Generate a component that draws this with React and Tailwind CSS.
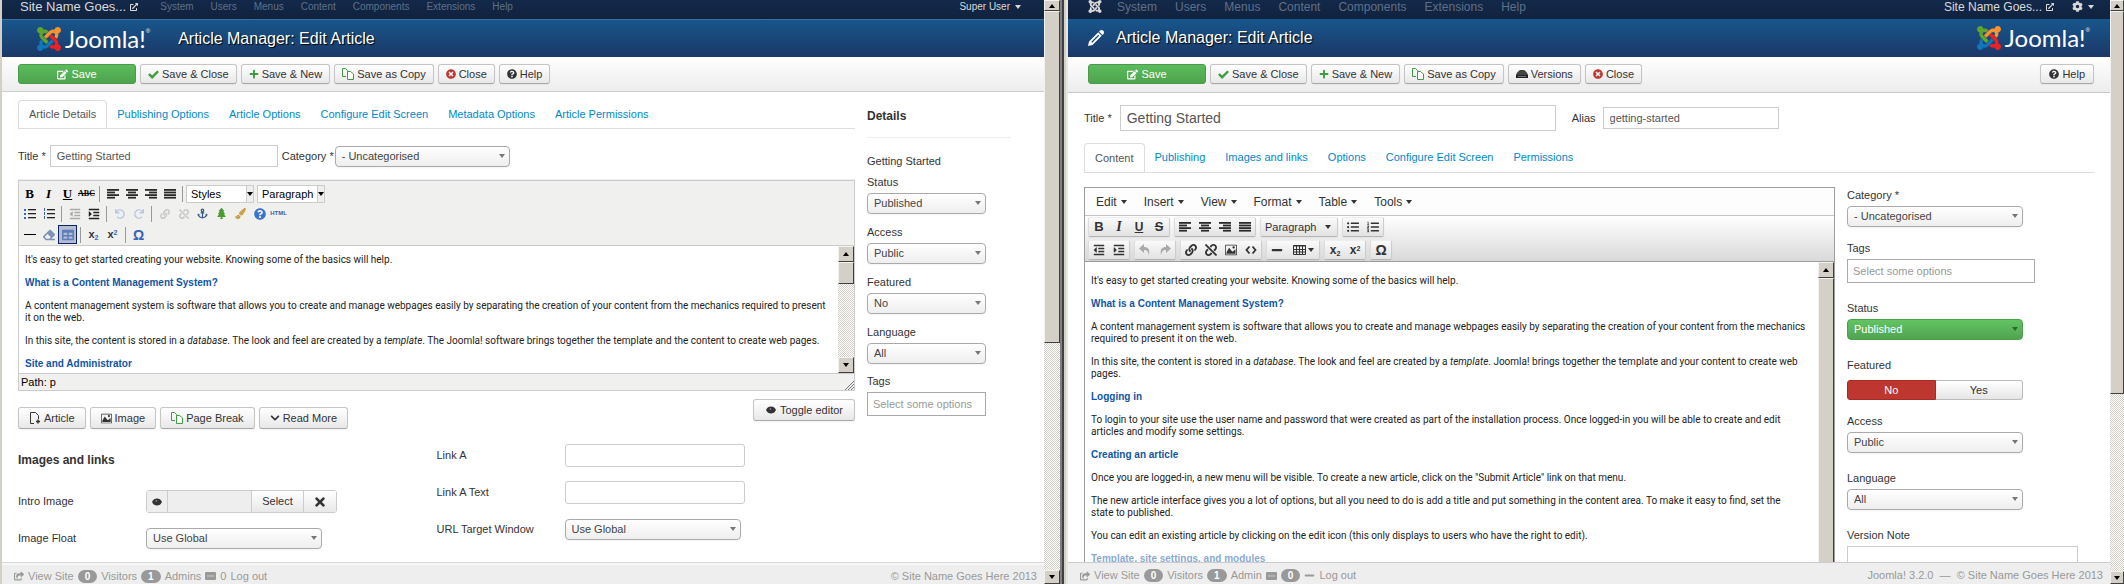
import React from "react";
import {
  FaEdit, FaPlus, FaTimesCircle, FaQuestionCircle, FaTimes, FaChevronDown,
  FaExternalLinkAlt, FaCog, FaShareSquare, FaMinus, FaLink, FaUnlink, FaUndo, FaRedo,
  FaTable, FaListUl, FaListOl, FaAnchor, FaPaintBrush, FaOutdent, FaIndent, FaEraser, FaTree,
} from "react-icons/fa";
import { ImImage, ImPencil, ImCheckmark } from "react-icons/im";

const JOOMLA = [
  ["#5fa52d", "M.6 92.1C.6 58.8 27.4 32 60.4 32c30 0 54.5 21.9 59.2 50.2 32.6-7.6 67.1.6 96.5 30l-44.3 44.3c-20.5-20.5-42.6-16.3-55.4-3.5-14.3 14.3-14.3 37.9 0 52.2l99.5 99.5-44 44.3c-87.7-87.2-49.7-49.7-99.8-99.7-26.8-26.5-35-64.8-24.8-98.9C20.4 144.6.6 120.7.6 92.1z"],
  ["#f7922d", "M130.1 208.5l44.3 44.3c10-10 89.7-89.7 99.7-99.8 14.3-14.3 37.6-14.3 51.9 0 12.8 12.8 17 35-3.5 55.4l44 44.3c31.2-31.2 38.5-67.6 28.9-101.2 29.2-4.1 51.9-29.2 51.9-59.5 0-33.2-26.8-60.1-59.8-60.1-30.3 0-55.4 22.5-59.5 51.6-33.8-9.9-71.7-1.5-98.3 25.1-18.3 19.1-71.1 71.5-99.6 99.9z"],
  ["#ed2024", "M396.4 360.7c8.2-32.7-.9-68.5-26.3-93.9-11.8-12.2 5 4.700-99.5-99.7l-44.3 44.3 99.7 99.7c14.3 14.3 14.3 37.6 0 51.9-12.8 12.8-35 17-55.4-3.5l-44 44.3c27.6 30.2 68 38.8 102.7 28 5.5 27.4 29.7 48.1 58.9 48.1 33 0 59.8-26.8 59.8-60.1 0-30.2-22.5-55-51.6-59.1z"],
  ["#0f76bb", "M312.1 307.6l-44-44.3c-87 86.4-50.4 50.4-99.7 99.8-14.3 14.3-37.6 14.3-51.9 0-13.1-13.4-16.9-35.3 3.2-55.4l-44-44.3c-30.2 30.2-38 65.2-29.5 98.3-26.7 6-46.2 29.900-46.2 58.2C0 453.2 26.8 480 59.8 480c28.6 0 52.5-19.8 58.6-46.7 32.7 8.2 68.5-.6 94.2-26 32.1-32 12.2-12.4 99.5-99.7z"],
];

const JoomlaMark = ({ mono, className }) => (
  <svg viewBox="0 32 448 448" className={className} aria-hidden="true">
    {JOOMLA.map(([c, d]) => <path key={c} d={d} fill={mono || c} />)}
  </svg>
);

const Logo = () => (
  <div className="flex items-center text-white">
    <JoomlaMark className="size-6" />
    <span className="ml-1 font-[Lato] text-2xl leading-6">Joomla!</span>
    <sup className="-top-2 text-[6px]">®</sup>
  </div>
);

const Caret = ({ className = "" }) => (
  <svg viewBox="0 0 6 4" className={"h-1 w-1.5 shrink-0 " + className} aria-hidden="true">
    <path d="M0 0h6L3 4z" fill="currentColor" />
  </svg>
);

const EyeIcon = () => (
  <svg viewBox="0 0 12 10" className="h-2.5 w-3 shrink-0" aria-hidden="true">
    <path d="M1 5c1-2.500 3-3.500 5-3.500s4 1 5 3.500c-1 2.500-3 3.500-5 3.500S2 7.500 1 5z" fill="#333" />
    <circle cx="5.4" cy="4" r=".8" fill="#aaa" />
  </svg>
);

const DriveIcon = () => (
  <svg viewBox="0 0 12 10" className="h-2.5 w-3 shrink-0" aria-hidden="true">
    <path d="M4 1h4c2 1 3.500 3 4 5H0c.5-2 2-4 4-5z" fill="#444" />
    <path d="M0 6h12v3H0z" fill="#222" />
    <path d="M2 7.5h8" stroke="#999" strokeWidth=".7" />
  </svg>
);

const PagesIcon = () => (
  <svg viewBox="0 0 12 12" className="size-3 shrink-0" fill="none" stroke="#3f9b3f" aria-hidden="true">
    <path d="M4 8.500H.5v-8h3l2 2v1" />
    <path d="M5.500 3.500h3l3 2.500v5.500h-6z" fill="#fff" />
  </svg>
);

const PageAddIcon = () => (
  <svg viewBox="0 0 12 12" className="size-3 shrink-0" fill="none" stroke="#333" aria-hidden="true">
    <path d="M5 11.500H1.500V.5h5l3 3V7" />
    <path d="M9 7.500v4M7 9.500h4" strokeWidth="1.500" />
  </svg>
);

const ALIGN = {
  left: [[0, 12], [0, 8], [0, 12], [0, 8]],
  center: [[0, 12], [2, 8], [0, 12], [2, 8]],
  right: [[0, 12], [4, 8], [0, 12], [4, 8]],
  justify: [[0, 12], [0, 12], [0, 12], [0, 12]],
};
const AlignIcon = ({ kind }) => (
  <svg viewBox="0 0 12 10" className="h-2.5 w-3" aria-hidden="true">
    {ALIGN[kind].map(([x, w], i) => <rect key={i} x={x} y={i * 2.6} width={w} height="1.8" fill="#2a2a2a" />)}
  </svg>
);

const BTN = "inline-flex items-center justify-center whitespace-nowrap rounded-[3px] border border-[#c5c5c5] border-b-[#a8a8a8] bg-linear-to-b from-white to-[#e8e8e8] text-[11px] text-[#333] shadow-xs";
const Btn = ({ icon, children, className = "h-5 px-[7px]" }) => (
  <button type="button" className={`${BTN} gap-[3px] ${className}`}>{icon}{children}</button>
);

const SaveBtn = () => (
  <button type="button" className="inline-flex h-5 w-[118px] items-center justify-center gap-[3px] rounded-[3px] border border-[#4a9a4a] bg-linear-to-b from-[#5cbb5c] to-[#4da44d] text-[11px] text-white">
    <FaEdit className="size-[11px]" />Save
  </button>
);

const Select = ({ id, value, className = "w-full", green }) => (
  <span className={`relative inline-flex ${className}`}>
    <select id={id} defaultValue={value} className={
      "h-[21px] w-full appearance-none rounded-[4px] border pl-[6px] text-[11px] leading-none " +
      (green ? "border-[#4a9f4a] bg-linear-to-b from-[#62c462] to-[#51a351] text-white"
        : "border-[#aaa] bg-linear-to-b from-white to-[#eee] text-[#444] shadow-xs")
    }>
      <option>{value}</option>
    </select>
    <Caret className={"pointer-events-none absolute top-2 right-[5px] " + (green ? "text-[#2d6a2d]" : "text-[#777]")} />
  </span>
);

const INPUT = "border border-[#ccc] bg-white px-[6px] text-[11px] text-[#555] placeholder:text-[#999]";

const Tabs = ({ items, height }) => (
  <nav className="flex border-b border-[#ddd]">
    {items.map((t, i) => (
      <a key={t} href="#" className={
        `flex items-center px-[10px] text-[11px] whitespace-nowrap ${height} ` +
        (i === 0 ? "-mb-px rounded-t-[4px] border border-b-0 border-[#ddd] bg-white text-[#555]" : "text-[#08c]")
      }>{t}</a>
    ))}
  </nav>
);

/* classic window scroll bar */
const BOX = "flex shrink-0 items-center justify-center border border-t-[#f4f2ee] border-l-[#f4f2ee] border-r-[#404040] border-b-[#404040] bg-[#d4d0c8] text-black";
const Scrollbar = ({ className, up = "h-4", down = "h-4", thumb }) => (
  <div className={`flex shrink-0 flex-col bg-[repeating-conic-gradient(#fff_0_25%,#d4d0c8_0_50%)] bg-[length:2px_2px] ${className}`}>
    <button type="button" aria-label="Scroll up" className={`${BOX} ${up}`}><Caret className="rotate-180" /></button>
    <div className={`${BOX} ${thumb}`} />
    <div className="flex-1" />
    {down && <button type="button" aria-label="Scroll down" className={`${BOX} ${down}`}><Caret /></button>}
  </div>
);

const Badge = ({ children }) => (
  <span className="rounded-full bg-[#999] px-[7px] text-[10px] leading-[13px] font-bold text-white">{children}</span>
);
const EnvelopeIcon = () => (
  <svg viewBox="0 0 11 8" className="h-2 w-[11px]" aria-hidden="true">
    <rect width="11" height="8" rx="1" fill="#999" /><path d="M2 4h7" stroke="#ccc" />
  </svg>
);

const Heading = ({ children }) => <h2 className="mb-[11px] font-['Liberation_Sans',Arial,sans-serif] text-[10px] leading-3 font-bold text-[#1055a5]">{children}</h2>;
const P = ({ children }) => <p className="mb-[11px]">{children}</p>;
const ARTICLE = "min-w-0 flex-1 overflow-hidden pl-[6px] font-[Roboto,sans-serif] text-[10px] leading-3 text-[#222]";

const Sep = () => <span className="mx-[3px] h-4 w-px bg-[#999]" />;
const Tool = ({ label, children, className = "w-5" }) => (
  <button type="button" aria-label={label} title={label} className={`flex h-[19px] items-center justify-center ${className}`}>{children}</button>
);
const OldTool = ({ className = "", ...rest }) => <Tool className={"w-[19px] " + className} {...rest} />;

const OldSelect = ({ label }) => (
  <span className="relative mr-[3px] inline-flex">
    <select aria-label={label} className="h-[18px] w-[68px] appearance-none border border-[#ccc] bg-white pl-1 text-[11px] leading-none text-black">
      <option>{label}</option>
    </select>
    <span className="pointer-events-none absolute top-0 right-0 flex h-[18px] w-2 items-center justify-center border border-[#ccc] bg-[#eee]"><Caret className="text-black" /></span>
  </span>
);

const ListIcon = ({ ordered }) => (
  <svg viewBox="0 0 12 12" className="size-3" aria-hidden="true">
    {[1, 5, 9].map((y) => (
      <g key={y}>
        {ordered ? <path d={`M1.5 ${y - 1}v3`} stroke="#3b64b5" /> : <rect x="0" y={y} width="2" height="2" fill="#3b64b5" />}
        <rect x="4" y={y} width="8" height="1.3" fill="#222" />
      </g>
    ))}
  </svg>
);

function LeftEditor() {
  return (
    <div className="border border-[#ccc] bg-[#f0f0ee]">
      <div className="flex h-[22px] items-center pt-1 pl-px font-['Liberation_Serif',serif] text-[13px] text-black">
        <OldTool label="Bold" className="font-bold">B</OldTool>
        <OldTool label="Italic" className="font-bold italic">I</OldTool>
        <OldTool label="Underline" className="font-bold underline">U</OldTool>
        <OldTool label="Strikethrough"><span className="text-[8px] font-bold line-through">ABC</span></OldTool>
        <Sep />
        {Object.keys(ALIGN).map((k) => <OldTool key={k} label={"Align " + k}><AlignIcon kind={k} /></OldTool>)}
        <Sep />
        <span className="flex font-['Liberation_Sans',Arial,sans-serif]"><OldSelect label="Styles" /><OldSelect label="Paragraph" /></span>
      </div>
      <div className="flex h-[21px] items-center pl-px">
        <OldTool label="Bullet list"><ListIcon /></OldTool>
        <OldTool label="Numbered list"><ListIcon ordered /></OldTool>
        <Sep />
        <OldTool label="Outdent"><FaOutdent className="size-3 text-[#aaa]" /></OldTool>
        <OldTool label="Indent"><FaIndent className="size-3 text-[#222]" /></OldTool>
        <Sep />
        <OldTool label="Undo"><FaUndo className="size-[10px] text-[#b9c7e4]" /></OldTool>
        <OldTool label="Redo"><FaRedo className="size-[10px] text-[#b9c7e4]" /></OldTool>
        <Sep />
        <OldTool label="Link"><FaLink className="size-[10px] text-[#c8c8c8]" /></OldTool>
        <OldTool label="Unlink"><FaUnlink className="size-[10px] text-[#c8c8c8]" /></OldTool>
        <OldTool label="Anchor"><FaAnchor className="size-[11px] text-[#3a5a80]" /></OldTool>
        <OldTool label="Image"><FaTree className="size-[11px] text-[#4a9a2d]" /></OldTool>
        <OldTool label="Cleanup"><FaPaintBrush className="size-[11px] text-[#c9a24a]" /></OldTool>
        <OldTool label="Help"><FaQuestionCircle className="size-3 text-[#3b74c8]" /></OldTool>
        <OldTool label="HTML"><span className="text-[6px] font-bold text-[#3b5fa5]">HTML</span></OldTool>
      </div>
      <div className="flex h-[21px] items-center pl-px">
        <OldTool label="Horizontal rule"><span className="h-px w-3 bg-black" /></OldTool>
        <OldTool label="Remove formatting"><FaEraser className="size-3 text-[#7f93b8]" /></OldTool>
        <OldTool label="Guidelines" className="border border-[#0a246a] bg-[#b6bdd2]"><FaTable className="size-3 text-[#5d7db8]" /></OldTool>
        <Sep />
        <OldTool label="Subscript"><span className="text-[11px] font-bold">x<sub className="text-[7px] text-[#3b64b5]">2</sub></span></OldTool>
        <OldTool label="Superscript"><span className="text-[11px] font-bold">x<sup className="text-[7px] text-[#3b64b5]">2</sup></span></OldTool>
        <Sep />
        <OldTool label="Special character"><span className="text-sm font-bold text-[#3b64b5]">Ω</span></OldTool>
      </div>
      <div className="flex h-[129px] border-y border-[#ccc] bg-white">
        <div className={`${ARTICLE} pt-2 pr-[6px]`}>
          <P>It's easy to get started creating your website. Knowing some of the basics will help.</P>
          <Heading>What is a Content Management System?</Heading>
          <P>A content management system is software that allows you to create and manage webpages easily by separating the creation of your content from the mechanics required to present it on the web.</P>
          <P>In this site, the content is stored in a <em>database</em>. The look and feel are created by a <em>template</em>. The Joomla! software brings together the template and the content to create web pages.</P>
          <Heading>Site and Administrator</Heading>
        </div>
        <Scrollbar className="w-4" thumb="h-[22px]" />
      </div>
      <div className="flex h-4 items-center justify-between pl-[2px] text-[11px] text-black">
        Path: p
        <svg viewBox="0 0 10 10" className="size-2.5 self-end" aria-hidden="true"><path d="M1 10l9-9M4 10l6-6M7 10l3-3" stroke="#777" /></svg>
      </div>
    </div>
  );
}

const Field = ({ id, label, children, className = "mt-[14px] h-[23px]" }) => (
  <div className={`flex items-center ${className}`}>
    <label htmlFor={id} className="w-32 shrink-0">{label}</label>{children}
  </div>
);

function LeftWindow() {
  return (
    <div className="flex min-w-0 flex-1 flex-col">
      <nav className="flex h-[19px] shrink-0 items-start bg-linear-to-b from-[#13294a] to-[#10223e] pl-[18px] text-[10px] leading-[14px] text-[#5f6f88]">
        <a href="#" className="flex items-center gap-1 pr-[22px] text-[13px] text-[#d9d9d9]">Site Name Goes... <FaExternalLinkAlt className="size-2" /></a>
        {["System", "Users", "Menus", "Content", "Components", "Extensions", "Help"].map((t) => <a key={t} href="#" className="mr-[17px]">{t}</a>)}
        <a href="#" className="mr-[23px] ml-auto flex items-center gap-[5px] text-[#d9d9d9]">Super User <Caret /></a>
      </nav>
      <header className="flex h-[38px] shrink-0 items-center gap-7 border-t border-[#3f6f98] bg-linear-to-b from-[#17568c] to-[#1a3867] pl-[35px] text-white">
        <Logo />
        <h1 className="text-base [text-shadow:1px_1px_1px_#000]">Article Manager: Edit Article</h1>
      </header>
      <div className="mt-[5px] flex h-[30px] shrink-0 items-start gap-1 border-b border-[#d0d0d0] bg-linear-to-b from-[#fcfcfc] to-[#ededed] px-4 pt-[2px]">
        <SaveBtn />
        <Btn icon={<ImCheckmark className="size-[11px] text-[#3f9b3f]" />}>Save &amp; Close</Btn>
        <Btn icon={<FaPlus className="size-[10px] text-[#3f9b3f]" />}>Save &amp; New</Btn>
        <Btn icon={<PagesIcon />}>Save as Copy</Btn>
        <Btn icon={<FaTimesCircle className="size-[10px] text-[#bd362f]" />}>Close</Btn>
        <Btn icon={<FaQuestionCircle className="size-[10px]" />}>Help</Btn>
      </div>
      <main className="flex min-h-0 flex-1 gap-3 overflow-hidden pr-[33px] pl-4">
        <form className="min-w-0 flex-1 pt-2">
          <Tabs height="h-7" items={["Article Details", "Publishing Options", "Article Options", "Configure Edit Screen", "Metadata Options", "Article Permissions"]} />
          <div className="mt-4 flex items-center">
            <label htmlFor="l-title" className="mr-1">Title *</label>
            <input id="l-title" defaultValue="Getting Started" className={`${INPUT} h-[22px] w-[228px]`} />
            <label htmlFor="l-cat" className="mr-px ml-1">Category *</label>
            <Select id="l-cat" value="- Uncategorised" className="w-[175px]" />
          </div>
          <div className="mt-3 border-t border-[#eee]"><LeftEditor /></div>
          <div className="flex items-start justify-between">
            <div className="mt-4 flex gap-1">
              <Btn className="h-[22px] px-[10px]" icon={<PageAddIcon />}>Article</Btn>
              <Btn className="h-[22px] px-[10px]" icon={<ImImage className="size-[11px]" />}>Image</Btn>
              <Btn className="h-[22px] px-[10px]" icon={<PagesIcon />}>Page Break</Btn>
              <Btn className="h-[22px] px-[10px]" icon={<FaChevronDown className="size-[10px]" />}>Read More</Btn>
            </div>
            <Btn className="mt-2 h-[22px] px-[11px]" icon={<EyeIcon />}>Toggle editor</Btn>
          </div>
          <div className="grid grid-cols-2">
            <div>
              <h3 className="mt-6 mb-[23px] text-xs leading-[14px] font-bold">Images and links</h3>
              <Field id="intro" label="Intro Image" className="h-[23px]">
                <div className="flex h-[23px] rounded-[3px] border border-[#ccc]">
                  <button type="button" aria-label="Preview" className="flex w-[21px] items-center justify-center border-r border-[#ccc] bg-[#eee]"><EyeIcon /></button>
                  <input id="intro" readOnly className="w-[84px] border-r border-[#ccc] bg-[#eee]" />
                  <button type="button" className="w-[52px] border-r border-[#ccc] bg-linear-to-b from-white to-[#e8e8e8]">Select</button>
                  <button type="button" aria-label="Clear" className="flex w-8 items-center justify-center bg-linear-to-b from-white to-[#e8e8e8]"><FaTimes className="size-[14px]" /></button>
                </div>
              </Field>
              <Field id="float" label="Image Float"><Select id="float" value="Use Global" className="w-44" /></Field>
            </div>
            <div className="pt-px">
              <Field id="linka" label="Link A"><input id="linka" className={`${INPUT} h-[23px] w-[180px] rounded-[3px]`} /></Field>
              <Field id="linkt" label="Link A Text"><input id="linkt" className={`${INPUT} h-[23px] w-[180px] rounded-[3px]`} /></Field>
              <Field id="target" label="URL Target Window"><Select id="target" value="Use Global" className="w-44" /></Field>
            </div>
          </div>
        </form>
        <aside className="w-36 shrink-0 leading-[14px]">
          <h3 className="mt-[17px] border-b border-[#eee] pb-[14px] text-xs leading-[14px] font-bold">Details</h3>
          <p className="mt-4 -mb-1">Getting Started</p>
          {[["Status", "Published"], ["Access", "Public"], ["Featured", "No"], ["Language", "All"]].map(([l, v]) => (
            <div key={l} className="mt-[11px] flex w-[119px] flex-col gap-1">
              <label htmlFor={"l-" + l}>{l}</label><Select id={"l-" + l} value={v} />
            </div>
          ))}
          <div className="mt-[10px] flex w-[119px] flex-col gap-1">
            <label htmlFor="l-tags">Tags</label>
            <input id="l-tags" placeholder="Select some options" className="h-6 border border-[#aaa] px-[5px] text-[11px] placeholder:text-[#999]" />
          </div>
        </aside>
      </main>
      <footer className="flex h-[22px] shrink-0 items-center gap-1 border-t border-[#d8d8d8] bg-[#eee] pt-[5px] pr-[7px] pl-3 text-[#999] shadow-[inset_0_3px_0_-1px_#f7f7f7]">
        <FaShareSquare className="size-[10px]" /><a href="#">View Site</a> <Badge>0</Badge> Visitors <Badge>1</Badge> Admins <EnvelopeIcon /> 0 <a href="#">Log out</a>
        <span className="ml-auto">© Site Name Goes Here 2013</span>
      </footer>
    </div>
  );
}

const Group = ({ children, className = "" }) => (
  <div className={`flex h-5 items-center rounded-[2px] border border-[#ccc] border-t-[#eee] border-l-[#ddd] border-b-[#b5b5b5] bg-linear-to-b from-[#fafafa] to-[#e2e2e2] text-[#333] shadow-xs ${className}`}>{children}</div>
);

function RightEditor() {
  return (
    <div className="flex min-w-0 flex-1 flex-col border border-b-0 border-[#9e9e9e]">
      <div className="flex h-7 items-center gap-[7px] border-b border-[#c5c5c5] bg-[#fdfdfd] pl-[6px] text-xs">
        {["Edit", "Insert", "View", "Format", "Table", "Tools"].map((t) => (
          <button key={t} type="button" className="flex items-center gap-1 px-[5px]">{t}<Caret /></button>
        ))}
      </div>
      <div className="flex flex-col gap-[3px] border-b border-[#9e9e9e] bg-linear-to-b from-white to-[#d9d9d9] pt-px pb-px pl-[3px]">
        <div className="flex gap-1">
          <Group>
            <Tool label="Bold"><b className="text-[13px]">B</b></Tool>
            <Tool label="Italic"><b className="font-['Liberation_Serif',serif] text-sm italic">I</b></Tool>
            <Tool label="Underline"><b className="text-xs underline">U</b></Tool>
            <Tool label="Strikethrough"><b className="text-[13px] line-through">S</b></Tool>
          </Group>
          <Group>{Object.keys(ALIGN).map((k) => <Tool key={k} label={"Align " + k}><AlignIcon kind={k} /></Tool>)}</Group>
          <Group><button type="button" className="flex w-[76px] items-center justify-between px-1 pr-[6px]">Paragraph <Caret /></button></Group>
          <Group>
            <Tool label="Bullet list"><FaListUl className="size-3" /></Tool>
            <Tool label="Numbered list"><FaListOl className="size-3" /></Tool>
          </Group>
        </div>
        <div className="flex gap-1">
          <Group>
            <Tool label="Outdent"><FaOutdent className="size-3" /></Tool>
            <Tool label="Indent"><FaIndent className="size-3" /></Tool>
          </Group>
          <Group>
            <Tool label="Undo"><svg viewBox="0 0 12 12" className="size-3" aria-hidden="true"><path d="M5 0v3c4 0 6 2 5 8C9 7 8 6 5 6v3L0 4.500z" fill="#aaa" /></svg></Tool>
            <Tool label="Redo"><svg viewBox="0 0 12 12" className="size-3" aria-hidden="true"><path d="M7 0v3C3 3 1 5 2 11c1-4 2-5 5-5v3l5-4.500z" fill="#aaa" /></svg></Tool>
          </Group>
          <Group>
            <Tool label="Link"><FaLink className="size-3" /></Tool>
            <Tool label="Unlink"><FaUnlink className="size-3" /></Tool>
            <Tool label="Image"><ImImage className="size-3" /></Tool>
            <Tool label="Source code"><svg viewBox="0 0 12 10" className="h-2.5 w-3" fill="none" stroke="#333" strokeWidth="1.800" aria-hidden="true"><path d="M4.500 1.500L1.500 5l3 3.500M7.500 1.500l3 3.500-3 3.500" /></svg></Tool>
          </Group>
          <Group>
            <Tool label="Horizontal line"><FaMinus className="size-3" /></Tool>
            <button type="button" aria-label="Table" className="flex w-8 items-center justify-center gap-[2px]">
              <svg viewBox="0 0 13 10" className="h-2.5 w-[13px]" fill="none" stroke="#333" aria-hidden="true"><path d="M.5 .5h12v9H.5zM0 1h13M0 4.500h13M0 7h13M3.500 0v10M6.500 0v10M9.500 0v10" /></svg>
              <Caret />
            </button>
          </Group>
          <Group>
            <Tool label="Subscript"><span className="text-xs font-bold">x<sub className="text-[7px]">2</sub></span></Tool>
            <Tool label="Superscript"><span className="text-xs font-bold">x<sup className="text-[7px]">2</sup></span></Tool>
          </Group>
          <Group><Tool label="Special character"><b className="text-sm">Ω</b></Tool></Group>
        </div>
      </div>
      <div className="flex min-h-0 flex-1">
        <div className={`${ARTICLE} pt-[13px] pr-2`}>
          <P>It's easy to get started creating your website. Knowing some of the basics will help.</P>
          <Heading>What is a Content Management System?</Heading>
          <P>A content management system is software that allows you to create and manage webpages easily by separating the creation of your content from the mechanics required to present it on the web.</P>
          <P>In this site, the content is stored in a <em>database</em>. The look and feel are created by a <em>template</em>. Joomla! brings together the template and your content to create web pages.</P>
          <Heading>Logging in</Heading>
          <P>To login to your site use the user name and password that were created as part of the installation process. Once logged-in you will be able to create and edit articles and modify some settings.</P>
          <Heading>Creating an article</Heading>
          <P>Once you are logged-in, a new menu will be visible. To create a new article, click on the "Submit Article" link on that menu.</P>
          <P>The new article interface gives you a lot of options, but all you need to do is add a title and put something in the content area. To make it easy to find, set the state&nbsp;to published.</P>
          <P>You can edit an existing article by clicking on the edit icon (this only displays to users who have the right to edit).</P>
          <div className="opacity-50"><Heading>Template, site settings, and modules</Heading></div>
        </div>
        <Scrollbar className="w-4" down="" thumb="h-full" />
      </div>
    </div>
  );
}

function RightWindow() {
  return (
    <div className="flex min-w-0 flex-1 flex-col">
      <nav className="flex h-[19px] shrink-0 items-start bg-linear-to-b from-[#13294a] to-[#10223e] pl-5 text-xs leading-[14px] text-[#5f6f88]">
        <JoomlaMark mono="#d9d9d9" className="mr-[15px] h-[13px] w-[14px]" />
        {["System", "Users", "Menus", "Content", "Components", "Extensions", "Help"].map((t) => <a key={t} href="#" className="mr-[18px]">{t}</a>)}
        <a href="#" className="mr-[18px] ml-auto flex items-center gap-1 text-[#d9d9d9]">Site Name Goes... <FaExternalLinkAlt className="size-2" /></a>
        <button type="button" aria-label="Settings" className="mr-4 flex items-center gap-[5px] self-start pt-px text-[#d9d9d9]"><FaCog className="size-[11px]" /><Caret /></button>
      </nav>
      <header className="flex h-[38px] shrink-0 items-center bg-linear-to-b from-[#17568c] to-[#1a3867] pr-5 pl-5 text-white">
        <ImPencil className="mr-3 size-4" />
        <h1 className="mr-auto text-base [text-shadow:1px_1px_1px_#000]">Article Manager: Edit Article</h1>
        <Logo />
      </header>
      <div className="mt-[5px] flex h-[31px] shrink-0 items-start gap-1 border-b border-[#c8c8c8] bg-linear-to-b from-[#fcfcfc] to-[#ededed] pt-[2px] pr-4 pl-5">
        <SaveBtn />
        <Btn icon={<ImCheckmark className="size-[11px] text-[#3f9b3f]" />}>Save &amp; Close</Btn>
        <Btn icon={<FaPlus className="size-[10px] text-[#3f9b3f]" />}>Save &amp; New</Btn>
        <Btn icon={<PagesIcon />}>Save as Copy</Btn>
        <Btn icon={<DriveIcon />}>Versions</Btn>
        <Btn icon={<FaTimesCircle className="size-[10px] text-[#bd362f]" />}>Close</Btn>
        <Btn className="ml-auto h-5 px-2" icon={<FaQuestionCircle className="size-[10px]" />}>Help</Btn>
      </div>
      <main className="flex min-h-0 flex-1 flex-col overflow-hidden px-4 pt-3">
        <div className="flex items-center">
          <label htmlFor="r-title" className="mr-2">Title *</label>
          <input id="r-title" defaultValue="Getting Started" className="h-[26px] w-[436px] border border-[#ccc] px-[6px] text-sm text-[#555]" />
          <label htmlFor="alias" className="mr-[7px] ml-4">Alias</label>
          <input id="alias" defaultValue="getting-started" className={`${INPUT} h-[22px] w-44`} />
        </div>
        <div className="mt-3"><Tabs height="h-[29px]" items={["Content", "Publishing", "Images and links", "Options", "Configure Edit Screen", "Permissions"]} /></div>
        <div className="mt-[14px] flex min-h-0 flex-1 gap-3">
          <RightEditor />
          <aside className="w-[247px] shrink-0 leading-[14px]">
            <div className="mt-px flex w-44 flex-col gap-1"><label htmlFor="r-cat">Category *</label><Select id="r-cat" value="- Uncategorised" /></div>
            <div className="mt-[14px] flex w-[188px] flex-col gap-1">
              <label htmlFor="r-tags">Tags</label>
              <input id="r-tags" placeholder="Select some options" className="h-6 border border-[#aaa] px-[5px] text-[11px] placeholder:text-[#999]" />
            </div>
            <div className="mt-[18px] flex w-44 flex-col gap-1"><label htmlFor="r-status">Status</label><Select id="r-status" value="Published" green /></div>
            <div className="mt-[18px]">Featured</div>
            <div className="mt-2 flex h-5 w-44 text-center leading-[18px]">
              <button type="button" className="flex-1 rounded-l-[3px] border border-[#a52c26] bg-[#bd362f] text-white">No</button>
              <button type="button" className="flex-1 rounded-r-[3px] border border-l-0 border-[#bbb] bg-linear-to-b from-white to-[#e6e6e6]">Yes</button>
            </div>
            <div className="mt-[14px] flex w-44 flex-col gap-1"><label htmlFor="r-access">Access</label><Select id="r-access" value="Public" /></div>
            <div className="mt-[18px] flex w-44 flex-col gap-1"><label htmlFor="r-lang">Language</label><Select id="r-lang" value="All" /></div>
            <div className="mt-[18px] flex w-[231px] flex-col gap-1">
              <label htmlFor="note">Version Note</label>
              <textarea id="note" className="h-10 resize-none border border-[#ccc]" />
            </div>
          </aside>
        </div>
      </main>
      <footer className="flex h-[22px] shrink-0 items-center gap-1 border-t border-[#ccc] bg-[#eee] pt-1 pr-[7px] pl-3 text-[#999]">
        <FaShareSquare className="size-[10px]" /><a href="#">View Site</a> <Badge>0</Badge> Visitors <Badge>1</Badge> Admin <EnvelopeIcon /> <Badge>0</Badge> <FaMinus className="size-[11px]" /> <a href="#">Log out</a>
        <span className="ml-auto whitespace-pre">Joomla! 3.2.0  —  © Site Name Goes Here 2013</span>
      </footer>
    </div>
  );
}

export default function App() {
  return (
    <div className="flex h-screen overflow-hidden border-l-2 border-[#d4d0c8] bg-white font-['Liberation_Sans',Arial,sans-serif] text-[11px] text-[#333]">
      <LeftWindow />
      <Scrollbar className="w-4" up="h-[11px]" down="h-[14px]" thumb="h-[332px]" />
      <div className="w-2 shrink-0 border-x-2 border-l-[#808080] border-r-[#e8e6e0] bg-linear-to-r from-[#404040] from-50% to-[#d4d0c8] to-50%" />
      <RightWindow />
      <Scrollbar className="w-[14px]" up="h-[11px]" down="h-[13px]" thumb="h-[383px]" />
    </div>
  );
}
